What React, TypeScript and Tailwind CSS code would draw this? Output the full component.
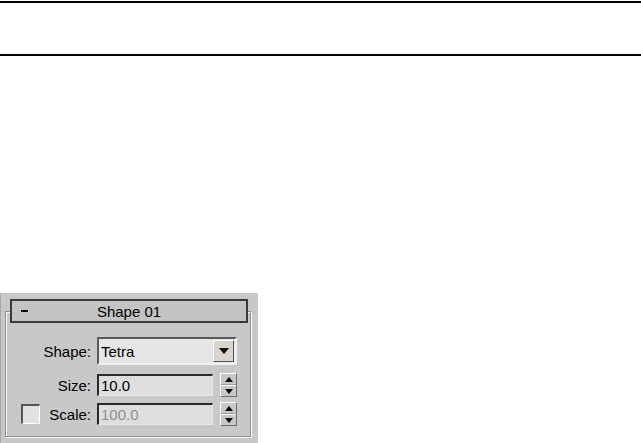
import React from "react";

const font = { fontFamily: '"Liberation Sans", Arial, sans-serif' };

function Spinner() {
  return (
    <div className="flex flex-col w-[17px] h-[24px] border border-t-white border-l-white border-b-[#6e6e6e] border-r-[#6e6e6e] bg-[#c8c8c8]">
      <div className="flex-1 flex items-center justify-center border-b border-[#9a9a9a]">
        <div className="w-0 h-0 border-l-[4px] border-r-[4px] border-b-[5px] border-l-transparent border-r-transparent border-b-black" />
      </div>
      <div className="flex-1 flex items-center justify-center border-t border-white">
        <div className="w-0 h-0 border-l-[4px] border-r-[4px] border-t-[5px] border-l-transparent border-r-transparent border-t-black" />
      </div>
    </div>
  );
}

function NumField({ value, disabled }: { value: string; disabled?: boolean }) {
  return (
    <div
      className={`w-[116px] h-[22px] flex items-center pl-[2px] border-t-2 border-l-2 border-t-[#2a2a2a] border-l-[#2a2a2a] border-b border-r border-b-[#e8e8e8] border-r-[#e8e8e8] bg-[#dedede] text-[15px] leading-none ${
        disabled ? "text-[#8f8f8f]" : "text-black"
      }`}
    >
      {value}
    </div>
  );
}

export default function App() {
  return (
    <div className="w-[641px] h-[443px] bg-white relative overflow-hidden" style={font}>
      <div className="h-px" />
      <div className="h-[2px] bg-black" />
      <div className="h-[51px]" />
      <div className="h-[2px] bg-black" />
      <div className="h-[237px]" />
      <div className="w-[258px] h-[150px] bg-[#c8c8c8] border-l border-[#a8a8a8] flex flex-col pt-[6px] pl-[4px]">
        <div className="relative z-10 ml-[5px] w-[238px] h-[24px] border-2 border-[#3a3a3a] bg-[#c3c3c3] flex items-center text-[15px] text-black leading-none">
          <span className="absolute left-[9px] top-[9px] w-[7px] h-[2px] bg-black" />
          <span className="w-full text-center">Shape 01</span>
        </div>
        <div className="-mt-[12px] w-[246px] h-[126px] border border-[#8e8e8e] shadow-[inset_1px_1px_0_#ffffff,1px_1px_0_#ffffff] flex flex-col text-[15px] text-black leading-none">
          <div className="flex items-center mt-[25px]">
            <div className="w-[85px] text-right">Shape:</div>
            <div className="ml-[6px] w-[140px] h-[28px] flex items-center justify-between border-t-2 border-l-2 border-t-[#5a5a5a] border-l-[#5a5a5a] border-b-2 border-r-2 border-b-[#f0f0f0] border-r-[#f0f0f0] bg-[#e6e6e6] pl-[2px] pr-[1px]">
              <span>Tetra</span>
              <div className="w-[21px] h-[22px] flex items-center justify-center bg-[#d9d5cd] border border-t-white border-l-white border-b-[#555] border-r-[#555]">
                <div className="w-0 h-0 border-l-[5px] border-r-[5px] border-t-[6px] border-l-transparent border-r-transparent border-t-black" />
              </div>
            </div>
          </div>
          <div className="flex items-center mt-[8px]">
            <div className="w-[85px] text-right">Size:</div>
            <div className="ml-[6px]">
              <NumField value="10.0" />
            </div>
            <div className="ml-[7px]">
              <Spinner />
            </div>
          </div>
          <div className="flex items-center mt-[5px]">
            <div className="ml-[15px] w-[19px] h-[20px] border-t-2 border-l-2 border-t-[#555] border-l-[#555] border-b border-r border-b-white border-r-white bg-[#e2e2e2]" />
            <div className="w-[51px] text-right">Scale:</div>
            <div className="ml-[6px]">
              <NumField value="100.0" disabled />
            </div>
            <div className="ml-[7px]">
              <Spinner />
            </div>
          </div>
        </div>
      </div>
    </div>
  );
}
